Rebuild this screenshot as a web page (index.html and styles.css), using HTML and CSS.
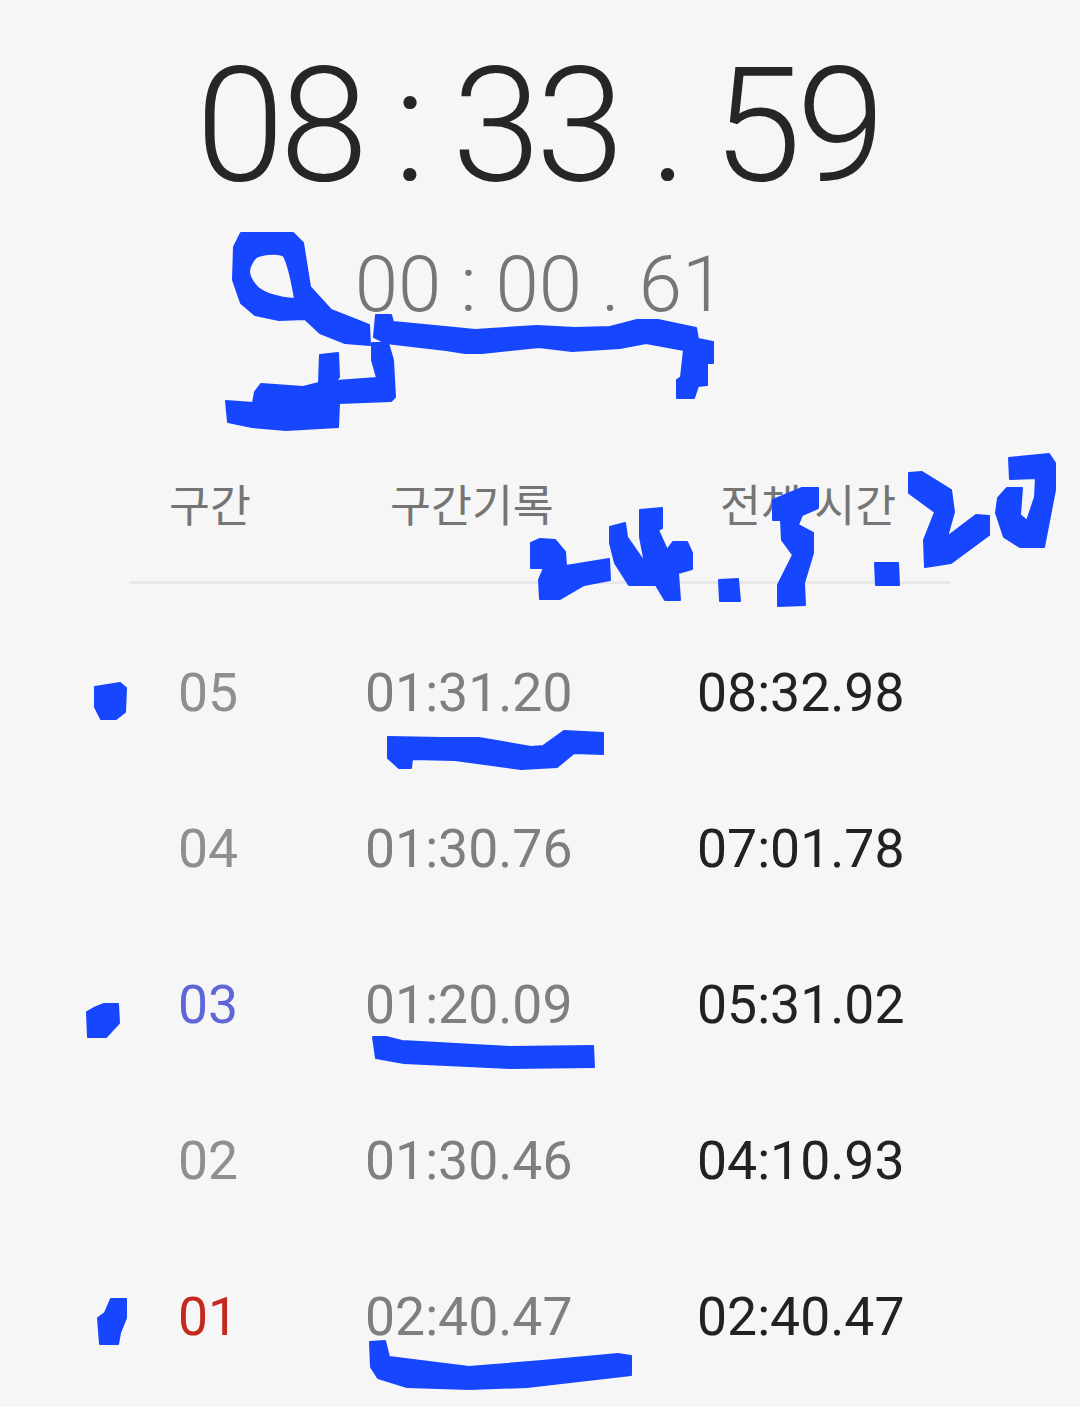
FILE: index.html
```html
<!DOCTYPE html>
<html lang="ko">
  <head>
    <meta charset="UTF-8" />
    <meta name="viewport" content="width=device-width, initial-scale=1.0" />
    <title>스톱워치</title>
    <link rel="stylesheet" href="styles.css">
  </head>
  <body>
    <div class="timer">08 : 33 . 59</div>
    <div class="lap-timer">00 : 00 . 61</div>
    <div class="heads">
      <span>구간</span>
      <span>구간기록</span>
      <span>전체 시간</span>
    </div>
    <div class="laps">
      <div class="lap"><span class="no">05</span><span class="split">01:31.20</span><span class="total">08:32.98</span></div>
      <div class="lap"><span class="no">04</span><span class="split">01:30.76</span><span class="total">07:01.78</span></div>
      <div class="lap"><span class="no best">03</span><span class="split">01:20.09</span><span class="total">05:31.02</span></div>
      <div class="lap"><span class="no">02</span><span class="split">01:30.46</span><span class="total">04:10.93</span></div>
      <div class="lap"><span class="no worst">01</span><span class="split">02:40.47</span><span class="total">02:40.47</span></div>
    </div>
    <!-- pen scribbles on top of the screenshot -->
    <svg class="ink" width="1080" height="1407" viewBox="0 0 1080 1407">
      <!-- loop and bracket around the lap timer -->
      <path fill-rule="evenodd" d="M241 233L293 233L303 243L310 287L331 310L369 325L370 345L345 343L320 333L305 319L279 320L255 315L241 303L233 280L234 247ZM258 256C268 253 280 253 284 256C290 268 292 282 295 299C282 298 268 296 258 288C252 282 249 276 249 271C250 264 254 258 258 256Z"/>
      <path d="M376 315L391 315L393 322L455 328L475 330L537 326L575 328L610 327L637 320L658 320L696 328L698 339L713 342L713 363L707 363L707 385L698 386L694 398L677 398L677 380L681 377L684 350L646 343L620 348L572 351L539 347L482 353L465 353L446 350L386 343L374 337Z"/>
      <path d="M372 343L388 343L393 360L395 397L391 401L339 403L338 427L286 430L252 427L228 422L226 401L253 403L255 392L261 384L303 387L319 383L320 355L338 353L339 377L336 381L377 378L372 360Z"/>
      <!-- date: 24.5.20 -->
      <path d="M531 543L540 539L555 540L565 552L566 566L609 559L610 580L584 585L560 599L540 599L539 580L544 568L531 568Z"/>
      <path d="M610 527L625 523L627 537L645 563L640 537L640 510L662 508L662 528L658 530L667 550L673 542L687 542L692 553L692 569L678 573L680 600L665 600L656 585L629 585L615 563L610 543Z"/>
      <path d="M719 580L738 579L740 601L720 601Z"/>
      <path d="M773 500L802 488L818 488L818 508L802 515L798 525L813 533L813 553L804 583L805 605L778 606L778 585L793 555L782 540L781 520L773 520Z"/>
      <path d="M875 563L898 563L899 585L876 585Z"/>
      <path d="M909 473L922 472L951 490L954 512L947 537L976 515L989 516L989 535L951 563L925 567L924 540L935 512L909 493Z"/>
      <path d="M1009 458L1049 454L1055 463L1055 490L1044 547L1020 547L1004 537L996 513L998 498L1007 488L1022 488L1020 515L1027 521L1035 497L1036 478L1010 479Z"/>
      <!-- marks on the laps -->
      <path d="M95 687L120 683L126 688L125 712L116 719L101 719L95 707Z"/>
      <path d="M388 737L441 738L479 738L531 747L543 746L564 731L603 733L603 754L574 753L557 767L521 769L455 760L412 759L411 768L399 768L388 758Z"/>
      <path d="M87 1012L94 1008L104 1004L118 1004L119 1023L106 1037L88 1037Z"/>
      <path d="M373 1037L386 1037L402 1041L510 1047L593 1046L594 1067L510 1068L404 1063L376 1058Z"/>
      <path d="M111 1299L126 1299L126 1318L120 1333L118 1344L100 1344L98 1318L105 1313Z"/>
      <path d="M370 1342L385 1341L389 1357L469 1367L542 1361L618 1354L631 1356L631 1375L527 1387L469 1389L407 1387L378 1378L371 1367Z"/>
    </svg>
  </body>
</html>
```

FILE: styles.css
```css
body{
    font-family: 'Roboto', 'Noto Sans CJK KR', sans-serif;
    background-color: #f6f6f7;
    margin: 0;
    padding: 0;
    height: 1407px;
    overflow: hidden;
    position: relative;
}
.timer{
    margin-top: 43px;
    height: 165px;
    padding-right: 4px;
    line-height: 165px;
    text-align: center;
    font-size: 160px;
    font-weight: 300;
    letter-spacing: -5px;
    word-spacing: -4px;
    color: #262626;
}
.lap-timer{
    margin-top: 36px;
    height: 82px;
    line-height: 82px;
    text-align: center;
    font-size: 78px;
    font-weight: 300;
    color: #767676;
}
.heads{
    margin: 149px 130px 0 129px;
    height: 106px;
    display: grid;
    grid-template-columns: 158px 354px 1fr;
    border-bottom: 3px solid #e8e8e8;
    font-family: 'Noto Sans CJK KR', sans-serif;
    font-size: 44.5px;
    color: #757575;
    line-height: 56px;
}
.heads span{
    padding-left: 40px;
}
.heads span:nth-child(2){
    padding-left: 103px;
}
.heads span:nth-child(3){
    padding-left: 79px;
}
.laps{
    margin-top: 31px;
}
.lap{
    height: 156px;
    display: grid;
    padding-left: 178px;
    grid-template-columns: 187px 332px 1fr;
    font-size: 53.5px;
    line-height: 156px;
}
.no{
    color: #8f8f8f;
}
.split{
    color: #7f7f7f;
}
.total{
    color: #222;
}
.no.best{
    color: #5f67d8;
}
.no.worst{
    color: #c5281c;
}
.ink{
    position: absolute;
    left: 0;
    top: 0;
}
.ink path{
    fill: #1746ff;
    stroke: #1746ff;
    stroke-width: 2;
    stroke-linejoin: round;
}
```
